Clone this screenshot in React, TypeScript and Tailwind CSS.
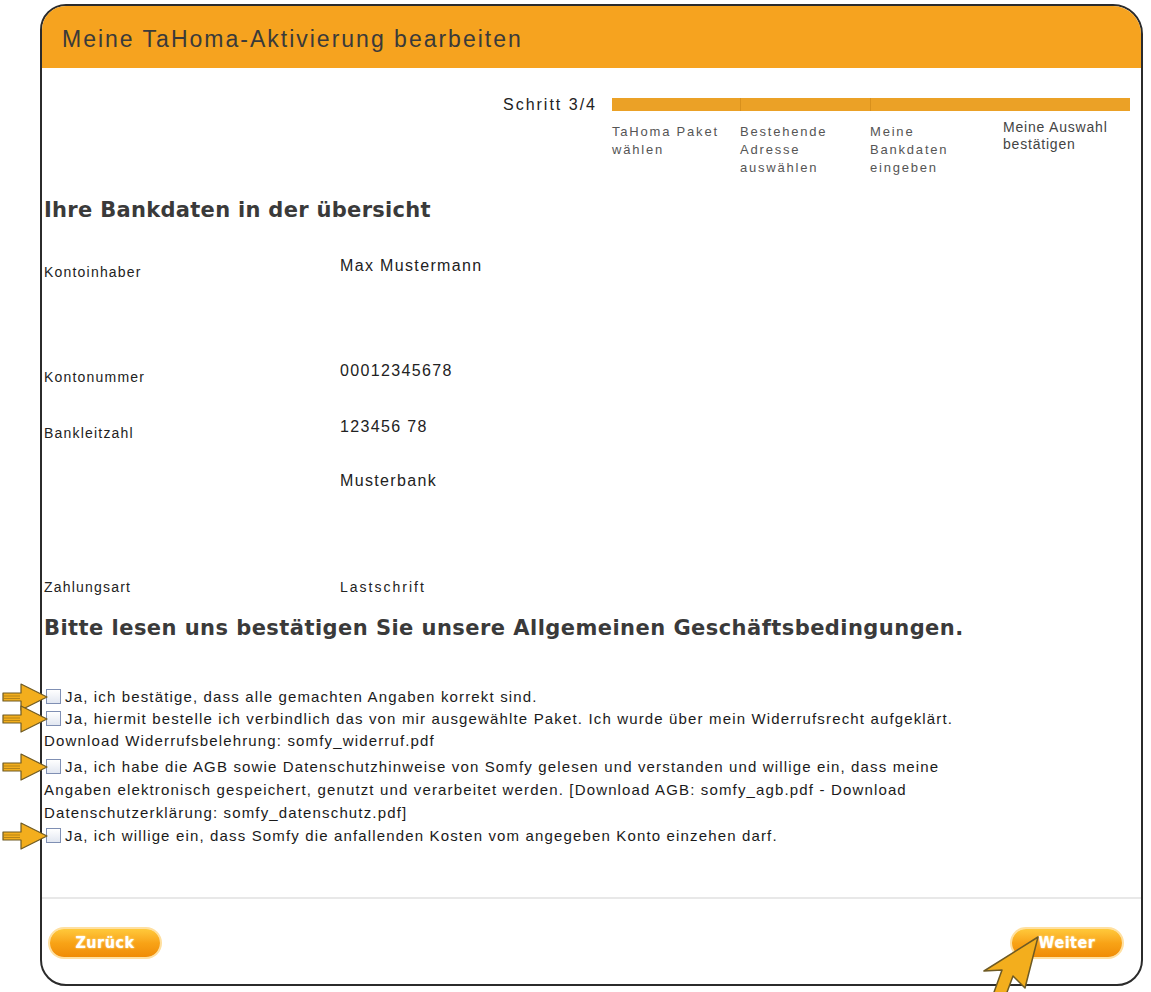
import React from 'react';

const sans = { fontFamily: '"Liberation Sans", Arial, sans-serif' };
const heading = { fontFamily: '"DejaVu Sans", Verdana, sans-serif' };
const narrow = { fontFamily: '"Liberation Sans Narrow", "DejaVu Sans Condensed", "Liberation Sans", sans-serif' };

const STEPS = [
  { lines: ['TaHoma Paket', 'wählen'] },
  { lines: ['Bestehende', 'Adresse', 'auswählen'] },
  { lines: ['Meine', 'Bankdaten', 'eingeben'] },
  { lines: ['Meine Auswahl', 'bestätigen'], last: true },
];

const ROWS = [
  { label: 'Kontoinhaber', value: 'Max Mustermann', h: 'h-[105px]' },
  { label: 'Kontonummer', value: '00012345678', h: 'h-[56px]' },
  { label: 'Bankleitzahl', value: '123456 78', h: 'h-[54px]' },
  { label: '', value: 'Musterbank', h: 'h-[106px]' },
];

// orange annotation arrow pointing at a checkbox
function PointerArrow() {
  return (
    <svg width="48" height="30" viewBox="0 0 48 30" className="absolute left-[-46px] top-[-8px]">
      <path d="M2 11 H20 V2 L46 15 L20 28 V19 H2 Z" fill="#F3AE1D" stroke="#6e5a24" strokeWidth="1.2" strokeLinejoin="round" />
      <path d="M3 14 H19 M3 16.5 H19" stroke="#b58418" strokeWidth="1" />
    </svg>
  );
}

function Checkbox({ arrow }: { arrow?: boolean }) {
  return (
    <span className="relative inline-block w-[15px] h-[15px] ml-[2px] mr-[4px] align-[-2px] border border-[#7f8fb3] bg-gradient-to-b from-white to-[#e2e7f1]">
      {arrow && <PointerArrow />}
    </span>
  );
}

function OrangeButton({ label }: { label: string }) {
  return (
    <button
      className="h-[28px] w-[110px] rounded-full bg-gradient-to-b from-[#FFC93A] via-[#F8A316] to-[#F08C05] shadow-[0_0_0_2px_#FFE0A0] text-white font-bold text-[16px] tracking-[0.5px] [text-shadow:0_0_2px_#fff6d0]"
      style={narrow}
    >
      {label}
    </button>
  );
}

export default function App() {
  return (
    <div className="w-[1151px] h-[992px] bg-white pt-[4px] pl-[40px] overflow-hidden" style={sans}>
      <div className="w-[1103px] h-[982px] border-2 border-[#2b2b2b] rounded-tl-[26px] rounded-tr-[30px] rounded-b-[26px] flex flex-col">
        {/* Header */}
        <div className="h-[62px] bg-[#F6A31F] rounded-tl-[24px] rounded-tr-[28px] flex items-center pl-[20px] pt-[4px]">
          <h1 className="text-[23px] tracking-[2px] text-[#3a3a3a]">Meine TaHoma-Aktivierung bearbeiten</h1>
        </div>

        <div className="flex-1 flex flex-col pl-[2px]">
          {/* Stepper */}
          <div className="flex justify-end pr-[11px] pt-[30px]">
            <div className="h-[13px] leading-[13px] text-[16px] tracking-[2px] text-[#222] mr-[15px] whitespace-nowrap">
              Schritt 3/4
            </div>
            <div className="w-[518px]">
              <div className="h-[13px] grid grid-cols-[128px_130px_133px_127px] bg-[#EBA126]">
                <div />
                <div className="border-l border-[#d8901c]" />
                <div className="border-l border-[#d8901c]" />
                <div />
              </div>
              <div className="grid grid-cols-[128px_130px_133px_127px] mt-[12px]">
                {STEPS.map((s, i) => (
                  <div
                    key={i}
                    className={
                      s.last
                        ? 'text-[14px] leading-[17px] tracking-[0.8px] text-[#444] -mt-[4px]'
                        : 'text-[13px] leading-[18px] tracking-[1.8px] text-[#555]'
                    }
                  >
                    {s.lines.map(l => (
                      <div key={l} className="whitespace-nowrap">{l}</div>
                    ))}
                  </div>
                ))}
              </div>
            </div>
          </div>

          {/* Bank data */}
          <h2 className="mt-[19px] text-[21px] leading-[28px] font-bold tracking-[0.3px] text-[#3a3a3a]" style={heading}>
            Ihre Bankdaten in der übersicht
          </h2>

          <div className="mt-[30px]">
            {ROWS.map(r => (
              <div key={r.value} className={`flex items-start ${r.h}`}>
                <div className="w-[296px] pt-[6px] text-[14px] leading-[24px] tracking-[1.2px] text-[#222]">{r.label}</div>
                <div className="text-[16px] leading-[24px] tracking-[1.35px] text-[#222]">{r.value}</div>
              </div>
            ))}
            <div className="flex items-start h-[24px]">
              <div className="w-[296px] text-[14px] leading-[24px] tracking-[1.2px] text-[#222]">Zahlungsart</div>
              <div className="text-[14px] leading-[24px] tracking-[2px] text-[#222]">Lastschrift</div>
            </div>
          </div>

          <h2 className="mt-[15px] text-[21px] leading-[28px] font-bold tracking-[0.45px] text-[#3a3a3a] whitespace-nowrap" style={heading}>
            Bitte lesen uns bestätigen Sie unsere Allgemeinen Geschäftsbedingungen.
          </h2>

          {/* Terms */}
          <div className="mt-[44px] text-[15px] tracking-[1.15px] text-[#1a1a1a] whitespace-nowrap">
            <p className="leading-[22px]">
              <Checkbox arrow />Ja, ich bestätige, dass alle gemachten Angaben korrekt sind.
            </p>
            <p className="leading-[22px]">
              <Checkbox arrow />Ja, hiermit bestelle ich verbindlich das von mir ausgewählte Paket. Ich wurde über mein Widerrufsrecht aufgeklärt.
              <br />
              Download Widerrufsbelehrung: somfy_widerruf.pdf
            </p>
            <p className="leading-[23px] mt-[3px]">
              <Checkbox arrow />Ja, ich habe die AGB sowie Datenschutzhinweise von Somfy gelesen und verstanden und willige ein, dass meine
              <br />
              Angaben elektronisch gespeichert, genutzt und verarbeitet werden. [Download AGB: somfy_agb.pdf - Download
              <br />
              Datenschutzerklärung: somfy_datenschutz.pdf]
            </p>
            <p className="leading-[23px]">
              <Checkbox arrow />Ja, ich willige ein, dass Somfy die anfallenden Kosten vom angegeben Konto einzehen darf.
            </p>
          </div>

          {/* Footer */}
          <div className="mt-auto -ml-[2px] border-t-2 border-[#e8e8e8] pt-[30px] pb-[27px] pl-[8px] pr-[19px] flex justify-between">
            <OrangeButton label="Zurück" />
            <div className="relative">
              <OrangeButton label="Weiter" />
              <svg width="64" height="64" viewBox="0 0 64 64" className="absolute left-[-32px] top-[5px]">
                <path
                  d="M58 3 L4 37 L22 36 L13 61 L26 61 L33 42 L45 54 Z"
                  fill="#F3AE1D"
                  stroke="#6e5a24"
                  strokeWidth="1.5"
                  strokeLinejoin="round"
                />
              </svg>
            </div>
          </div>
        </div>
      </div>
    </div>
  );
}
